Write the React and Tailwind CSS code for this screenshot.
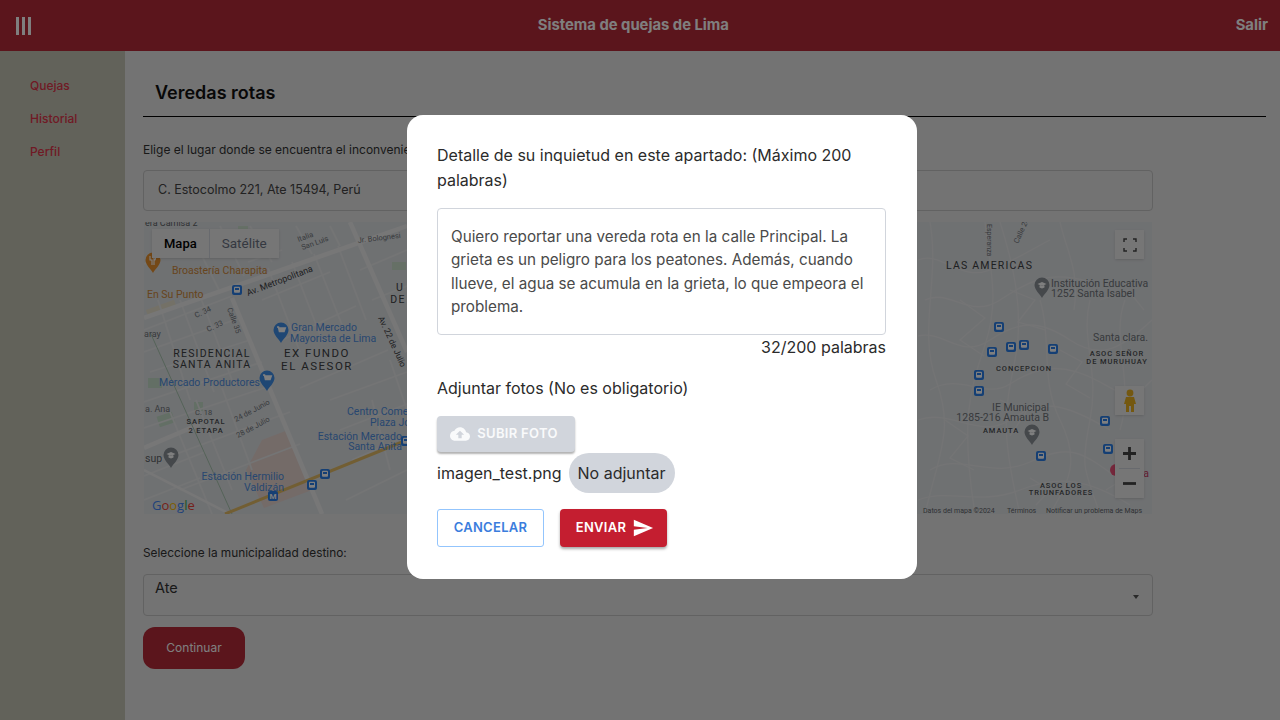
const cloudPath =
    "M19.35 10.04C18.67 6.59 15.64 4 12 4 9.11 4 6.6 5.64 5.35 8.04 2.34 8.36 0 10.91 0 14c0 3.31 2.69 6 6 6h13c2.76 0 5-2.24 5-5 0-2.64-2.05-4.78-4.65-4.96zM14 13v4h-4v-4H7l5-5 5 5h-3z";
const sendPath = "M2.01 21 23 12 2.01 3 2 10l15 2-15 2z";

const busStops = [
    [999, 327], [992, 352], [1011, 347], [1024, 345], [1053, 349], [979, 375], [979, 391], [1105, 421],
    [1041, 456], [1108, 449],
];

// minor streets of the map, in screen coordinates
const leftStreets = [
    "M144 330 L232 296", "M144 352 L240 318", "M150 372 L250 340", "M144 402 L262 362", "M144 428 L270 386",
    "M160 460 L290 412", "M180 490 L300 444", "M158 300 L190 400", "M180 300 L214 392", "M200 296 L232 380",
    "M222 388 L252 470", "M196 400 L232 490", "M170 412 L212 514", "M248 262 L282 250", "M262 300 L330 272",
    "M282 340 L356 306", "M300 388 L388 350", "M268 268 L300 352", "M292 262 L322 340", "M314 254 L344 330",
    "M338 246 L366 320", "M190 232 L220 292", "M220 226 L244 276", "M250 226 L272 262", "M296 226 L312 254",
    "M330 226 L340 246", "M360 270 L407 250", "M372 300 L407 286", "M330 400 L407 372", "M340 430 L407 404",
    "M352 460 L407 436", "M346 500 L407 470", "M372 400 L390 470", "M390 360 L407 410", "M144 264 L170 254",
    "M144 476 L205 452", "M144 500 L200 478",
];
const rightStreets = [
    "M918 260 C940 250 960 282 990 270 S1030 250 1050 240", "M925 300 C950 288 970 320 1000 300 S1050 270 1090 282",
    "M918 336 C945 330 960 360 990 340 S1040 320 1070 340 S1120 350 1152 320",
    "M930 390 C960 372 985 400 1010 384 S1060 360 1100 382 S1130 400 1152 380",
    "M918 420 C950 408 980 440 1010 420 S1060 400 1110 430", "M930 470 C960 452 990 480 1030 462 S1080 450 1120 480",
    "M918 500 C950 488 980 506 1020 490 S1090 480 1130 505", "M985 222 C990 270 1000 300 985 345 S960 420 975 514",
    "M1000 222 C1012 260 1025 310 1015 360 S1000 430 1020 514", "M1040 300 C1052 340 1040 380 1060 420 S1070 480 1050 514",
    "M1090 300 C1080 340 1100 370 1090 420 S1085 470 1100 514", "M930 222 C940 280 918 330 936 380 S940 450 925 514",
    "M1125 300 C1110 340 1135 380 1120 430", "M1060 222 C1066 250 1080 270 1074 310", "M960 300 L985 318 L960 340 L984 356",
    "M1010 290 L1035 300 L1018 322 L1046 330", "M1060 350 L1082 362 L1066 384 L1090 398", "M945 420 L968 436 L950 458 L974 470",
    "M1030 478 L1050 490 L1036 505", "M1100 300 L1128 290 L1144 310", "M1106 490 L1128 476", "M1000 400 L1026 412 L1010 436",
];

function Pin({ x, y, fill, children }) {
    return (
        <g transform={`translate(${x} ${y})`}>
            <path d="M0 11 C-2 7 -7.5 3 -7.5 -2 A7.5 7.5 0 1 1 7.5 -2 C7.5 3 2 7 0 11 Z" fill={fill} />
            {children}
        </g>
    );
}

function Cart() {
    return <path d="M-4 -5 H-2.5 L-1.5 -0.5 H3 L4.2 -4 H-2" stroke="#fff" strokeWidth="1.6" fill="#fff" />;
}

function Fork() {
    return <path d="M-3 -6 V-2 H-1 V3 M1 -6 V3 M1 -6 C3 -5 3 -2 1 -1.5" stroke="#fff" strokeWidth="1.1" fill="none" />;
}

function Cap() {
    return <path d="M-4.5 -3 L0 -5 L4.5 -3 L0 -1 Z M-2.5 -1.5 V0.5 L0 1.5 L2.5 0.5 V-1.5" fill="#fff" />;
}

function Bus({ x, y, label = false }) {
    return (
        <g transform={`translate(${x} ${y})`}>
            <rect x="-5" y="-5" width="10" height="10" rx="2" fill="#2a7fe8" />
            {label ? (
                <text x="0" y="3" textAnchor="middle" fontSize="8" fontWeight="700" fill="#fff">M</text>
            ) : (
                <>
                    <rect x="-3" y="-3.2" width="6" height="6" rx="1" fill="#fff" />
                    <rect x="-2" y="-2" width="4" height="2" fill="#2a7fe8" />
                </>
            )}
        </g>
    );
}

function MapLabel({ x, y, anchor = "start", size = 10.5, color = "#4f8fe0", spacing = 0, weight = 400, children }) {
    return (
        <text x={x} y={y} textAnchor={anchor} fontSize={size} fill={color} letterSpacing={spacing} fontWeight={weight}>
            {children}
        </text>
    );
}

function MapDrawing() {
    const place = { size: 10.5, color: "#3c4043", spacing: 1.2, anchor: "middle" };
    const small = { size: 7.5, color: "#4a4d50", spacing: 0.9, anchor: "middle", weight: 500 };
    const street = { size: 7.5, color: "#70757a" };
    return (
        <svg viewBox="144 222 1008 292" className="block w-full h-full font-['Roboto',sans-serif]">
            <rect x="144" y="222" width="1008" height="292" fill="#dfe2e5" />

            {/* patches */}
            <path d="M262 440 L288 430 L312 490 L264 508 L246 470 Z" fill="#e8d6d1" />
            <rect x="148" y="378" width="14" height="10" fill="#c6dfca" />
            <rect x="158" y="414" width="16" height="11" fill="#c6dfca" transform="rotate(-18 166 420)" />
            <rect x="194" y="402" width="9" height="9" fill="#c6dfca" />
            <rect x="225" y="246" width="12" height="8" fill="#cce0cd" />
            <rect x="238" y="226" width="10" height="7" fill="#cce0cd" />
            <rect x="392" y="262" width="14" height="8" fill="#cce0cd" />
            <rect x="146" y="305" width="30" height="6" fill="#e8e3cf" transform="rotate(-20 160 308)" />

            {/* streets */}
            <g stroke="#e9eaeb" strokeWidth="1.8" fill="none">
                {leftStreets.map((d) => (
                    <path key={d} d={d} />
                ))}
            </g>
            <g stroke="#e8e9ea" strokeWidth="1.3" fill="none">
                {rightStreets.map((d) => (
                    <path key={d} d={d} />
                ))}
            </g>
            <g stroke="#efefef" strokeWidth="4.5" fill="none">
                <path d="M144 318 L407 226" />
                <path d="M232 298 L322 514" />
                <path d="M350 222 L407 352" />
                <path d="M144 448 L200 424" />
                <path d="M144 470 L230 514" strokeWidth="2.5" />
            </g>
            <path d="M150 332 L232 514" stroke="#a9c6b0" strokeWidth="1" fill="none" />
            <path d="M225 514 L407 440" stroke="#e4bd66" strokeWidth="3" fill="none" />

            {/* left labels */}
            <MapLabel x={145} y={226} size={9} color="#5f6368">era Camisa 2</MapLabel>
            <MapLabel x={172} y={274} color="#d08a3a">Broastería Charapita</MapLabel>
            <MapLabel x={147} y={298} color="#d08a3a">En Su Punto</MapLabel>
            <g transform="rotate(-21 248 296)">
                <MapLabel x={248} y={296} size={9} color="#3c4043">Av. Metropolitana</MapLabel>
            </g>
            <g transform="rotate(-20 302 246)">
                <MapLabel x={300} y={241} {...street}>Italia</MapLabel>
                <MapLabel x={301} y={250} {...street}>San Luis</MapLabel>
            </g>
            <g transform="rotate(-7 358 243)">
                <MapLabel x={358} y={243} {...street}>Jr. Bolognesi</MapLabel>
            </g>
            <MapLabel x={291} y={331}>Gran Mercado</MapLabel>
            <MapLabel x={290} y={342}>Mayorista de Lima</MapLabel>
            <MapLabel x={212} y={357} {...place}>RESIDENCIAL</MapLabel>
            <MapLabel x={212} y={368} {...place}>SANTA ANITA</MapLabel>
            <MapLabel x={317} y={357} {...place} size={11.5} spacing={1.5}>EX FUNDO</MapLabel>
            <MapLabel x={317} y={370} {...place} size={11.5} spacing={1.5}>EL ASESOR</MapLabel>
            <MapLabel x={159} y={386}>Mercado Productores</MapLabel>
            <MapLabel x={206} y={424} {...small}>SAPOTAL</MapLabel>
            <MapLabel x={206} y={433} {...small}>2 ETAPA</MapLabel>
            <MapLabel x={195} y={415} {...street}>C. 18</MapLabel>
            <g transform="rotate(-28 236 422)">
                <MapLabel x={236} y={422} {...street}>24 de Junio</MapLabel>
            </g>
            <g transform="rotate(-28 238 438)">
                <MapLabel x={238} y={438} {...street}>28 de Julio</MapLabel>
            </g>
            <g transform="rotate(-25 196 318)">
                <MapLabel x={196} y={318} {...street}>C. 34</MapLabel>
            </g>
            <g transform="rotate(-25 208 332)">
                <MapLabel x={208} y={332} {...street}>C. 33</MapLabel>
            </g>
            <g transform="rotate(70 224 312)">
                <MapLabel x={222} y={308} {...street}>Calle 35</MapLabel>
            </g>
            <g transform="rotate(65 378 318)">
                <MapLabel x={378} y={318} size={8.5} color="#3c4043">Av. 22 de Julio</MapLabel>
            </g>
            <MapLabel x={400} y={291} {...place} anchor="middle">U</MapLabel>
            <MapLabel x={398} y={303} {...place} anchor="middle">DE</MapLabel>
            <MapLabel x={144} y={337} {...street} size={9}>aray</MapLabel>
            <MapLabel x={145} y={412} {...street} size={9}>a. Ana</MapLabel>
            <MapLabel x={145} y={462} size={10.5} color="#5f6368">sup</MapLabel>
            <MapLabel x={284} y={480} anchor="end">Estación Hermilio</MapLabel>
            <MapLabel x={284} y={491} anchor="end">Valdizán</MapLabel>
            <MapLabel x={347} y={415}>Centro Come</MapLabel>
            <MapLabel x={370} y={426}>Plaza Jo</MapLabel>
            <MapLabel x={402} y={440} anchor="end">Estación Mercado</MapLabel>
            <MapLabel x={402} y={450} anchor="end">Santa Anita</MapLabel>

            {/* left markers */}
            <Pin x={153} y={262} fill="#e8912d"><Fork /></Pin>
            <Pin x={281} y={332} fill="#3f8fe8"><Cart /></Pin>
            <Pin x={267} y={380} fill="#3f8fe8"><Cart /></Pin>
            <Pin x={171} y={457} fill="#8a9197"><Cap /></Pin>
            <Bus x={237} y={290} />
            <Bus x={325} y={474} />
            <Bus x={312} y={485} />
            <Bus x={273} y={496} label />
            <Bus x={406} y={441} />

            {/* Google */}
            <text x={152} y={510} fontSize="13" fontWeight="500" fontFamily="'Open Sans',sans-serif">
                <tspan fill="#4285f4">G</tspan>
                <tspan fill="#ea4335">o</tspan>
                <tspan fill="#fbbc05">o</tspan>
                <tspan fill="#4285f4">g</tspan>
                <tspan fill="#34a853">l</tspan>
                <tspan fill="#ea4335">e</tspan>
            </text>

            {/* right labels */}
            <MapLabel x={946} y={269} {...place} anchor="start">LAS AMERICAS</MapLabel>
            <MapLabel x={1051} y={287} color="#70757a">Institución Educativa</MapLabel>
            <MapLabel x={1051} y={297} color="#70757a">1252 Santa Isabel</MapLabel>
            <MapLabel x={1093} y={341} color="#70757a">Santa clara. </MapLabel>
            <MapLabel x={1117} y={356} {...small}>ASOC SEÑOR</MapLabel>
            <MapLabel x={1117} y={364} {...small}>DE MURUHUAY</MapLabel>
            <MapLabel x={1024} y={371} {...small}>CONCEPCION</MapLabel>
            <MapLabel x={1049} y={411} anchor="end" color="#70757a">IE Municipal</MapLabel>
            <MapLabel x={1049} y={421} anchor="end" color="#70757a">1285-216 Amauta B</MapLabel>
            <MapLabel x={983} y={433} {...small} anchor="start">AMAUTA</MapLabel>
            <MapLabel x={1061} y={488} {...small}>ASOC LOS</MapLabel>
            <MapLabel x={1061} y={495} {...small}>TRIUNFADORES</MapLabel>
            <g transform="rotate(90 987 224)">
                <MapLabel x={987} y={224} {...street} size={7}>Esperanza</MapLabel>
            </g>
            <g transform="rotate(-65 1018 244)">
                <MapLabel x={1018} y={244} {...street}>Calle 24</MapLabel>
            </g>

            {/* right markers */}
            <Pin x={1042} y={287} fill="#8a9197"><Cap /></Pin>
            <Pin x={1032} y={434} fill="#8a9197"><Cap /></Pin>
            <circle cx={1116} cy={470} r="6" fill="#ea4f77" />
            <text x="1146" y="477" fontSize="10.5" fill="#c5385f" textAnchor="middle">a</text>
            {busStops.map(([x, y]) => (
                <Bus key={`${x}-${y}`} x={x} y={y} />
            ))}

            {/* attribution */}
            <text x="923" y="513" fontSize="7" fill="#5f6368">Datos del mapa ©2024</text>
            <text x="1007" y="513" fontSize="7" fill="#5f6368">Términos</text>
            <text x="1046" y="513" fontSize="7" fill="#5f6368">Notificar un problema de Maps</text>
        </svg>
    );
}

function MapControls() {
    return (
        <>
            <div className="absolute left-2 top-[7px] flex h-[29px] items-center bg-[#ececec] font-['Roboto',sans-serif] shadow-sm">
                <span className="flex h-full items-center border-r border-gray-300 px-3 text-[13px] font-medium text-black">Mapa</span>
                <span className="flex h-full items-center px-[12px] text-[13.5px] text-gray-500">Satélite</span>
            </div>
            <div className="absolute right-2 top-2 flex h-[29px] w-[29px] items-center justify-center bg-[#ececec] shadow-sm">
                <svg viewBox="0 0 14 14" className="w-[14px] h-[14px]" fill="none" stroke="#444" strokeWidth="1.4">
                    <path d="M1 4 V1 H4 M10 1 H13 V4 M1 10 V13 H4 M13 10 V13 H10" />
                </svg>
            </div>
            <div className="absolute right-2 top-[164px] flex h-[29px] w-[29px] items-center justify-center bg-[#ececec] shadow-sm">
                <svg viewBox="0 0 14 24" className="w-[14px] h-[24px]" fill="#e8b020">
                    <circle cx="7" cy="4" r="3.4" />
                    <path d="M3 8 H11 L13 15 H11 V23 H8 V17 H6 V23 H3 V15 H1 Z" />
                </svg>
            </div>
            <div className="absolute right-2 top-[217px] flex w-[29px] flex-col items-center bg-[#ececec] px-1 shadow-sm">
                <svg viewBox="0 0 14 14" className="my-[8px] w-[13px] h-[13px]" fill="#444">
                    <path d="M5.5 0 H8.5 V5.5 H14 V8.5 H8.5 V14 H5.5 V8.5 H0 V5.5 H5.5 Z" />
                </svg>
                <div className="h-px w-full bg-gray-300" />
                <svg viewBox="0 0 14 14" className="my-[8px] w-[13px] h-[13px]" fill="#444">
                    <path d="M0 5.5 H14 V8.5 H0 Z" />
                </svg>
            </div>
        </>
    );
}

function Modal() {
    return (
        <div className="fixed inset-0 z-10 bg-black/50 flex items-start justify-center pl-[44px] pt-[115px]">
            <div className="w-[510px] h-[464px] rounded-2xl bg-white pl-[30px] pr-[31px] pt-[28px] text-[#2b2b2b]">
                <p className="text-base leading-[25px]">
                    Detalle de su inquietud en este apartado: (Máximo 200 palabras)
                </p>
                <div className="mt-[15px] h-[127px] rounded border border-gray-300 px-[13px] pt-[16px] text-[15.25px] leading-[23.3px] text-[#4a4a4a]">
                    Quiero reportar una vereda rota en la calle Principal. La grieta es un peligro para los peatones. Además, cuando llueve, el agua se acumula en la grieta, lo que empeora el problema.
                </div>
                <p className="text-right text-base leading-6">32/200 palabras</p>
                <p className="mt-[17px] text-base leading-6">Adjuntar fotos (No es obligatorio)</p>
                <button className="mt-4 flex h-9 w-[138px] items-center justify-center gap-[7px] rounded-sm bg-gray-300 pr-1 text-[13px] font-semibold tracking-[0.3px] text-gray-50 shadow-[0_2px_2px_rgba(0,0,0,0.3)]">
                    <svg viewBox="0 0 24 24" className="w-5 h-5" fill="currentColor">
                        <path d={cloudPath} />
                    </svg>
                    SUBIR FOTO
                </button>
                <div className="mt-px flex items-center gap-[7px] text-base">
                    <span>imagen_test.png</span>
                    <span className="flex h-10 items-center rounded-[20px] bg-gray-300 px-[9px]">No adjuntar</span>
                </div>
                <div className="mt-4 flex gap-4">
                    <button className="h-[38px] w-[107px] rounded-[3px] border border-[#93c5fd] text-[13px] font-semibold tracking-[0.3px] text-[#3b7ddd]">
                        CANCELAR
                    </button>
                    <button className="flex h-[38px] w-[107px] items-center justify-center gap-[6px] rounded-sm bg-[#c41e30] pl-[3px] text-[13px] font-semibold tracking-[0.3px] text-white shadow-[0_2px_3px_rgba(0,0,0,0.35)]">
                        ENVIAR
                        <svg viewBox="0 0 24 24" className="w-[22px] h-[22px]" fill="currentColor">
                            <path d={sendPath} />
                        </svg>
                    </button>
                </div>
            </div>
        </div>
    );
}

export default function App() {
    return (
        <div className="flex h-[720px] w-[1280px] flex-col overflow-hidden bg-[#e6e6e6] font-['Inter',sans-serif] text-[#333]">
            {/* Header */}
            <header className="flex h-[51px] shrink-0 items-center justify-between bg-[#b62a38] pl-4 pr-3 text-white">
                <div className="flex h-[18px] gap-[3px]">
                    <span className="w-[3px] bg-white" />
                    <span className="w-[3px] bg-white" />
                    <span className="w-[3px] bg-white" />
                </div>
                <span className="text-[14.8px] font-bold">Sistema de quejas de Lima</span>
                <span className="text-[14.8px] font-bold">Salir</span>
            </header>

            <div className="flex flex-1">
                {/* Sidebar */}
                <nav className="w-[125px] shrink-0 bg-[#c4c4b4] pl-[30px] pt-[27px] text-xs font-medium text-[#e0344a]">
                    <ul className="flex flex-col gap-[17px]">
                        <li>Quejas</li>
                        <li>Historial</li>
                        <li>Perfil</li>
                    </ul>
                </nav>

                {/* Main */}
                <main className="flex-1 pl-[18px] pr-[14px]">
                    <h1 className="h-[66px] border-b border-black pl-3 pt-[30px] text-lg leading-6 font-semibold text-[#111]">
                        Veredas rotas
                    </h1>
                    <div className="w-[1010px]">
                        <p className="mt-[25px] text-xs leading-4">Elige el lugar donde se encuentra el inconveniente:</p>
                        <div className="mt-3 flex h-[41px] items-center rounded border border-[#c4c4c4] pl-[14px] text-[12.5px] text-[#444]">
                            C. Estocolmo 221, Ate 15494, Perú
                        </div>
                        <div className="relative mx-px mt-[11px] h-[292px]">
                            <MapDrawing />
                            <MapControls />
                        </div>
                        <p className="mt-[31px] text-[11.85px] leading-4">Seleccione la municipalidad destino:</p>
                        <div className="relative mt-[13px] h-[42px] rounded border border-[#c4c4c4] pl-[11px] pt-[3px] text-[14.5px] leading-5">
                            Ate
                            <span className="absolute right-[13px] top-[20px] h-0 w-0 border-x-[3.5px] border-t-4 border-x-transparent border-t-[#555]" />
                        </div>
                        <button className="mt-[11px] h-[42px] w-[102px] rounded-xl bg-[#b62a38] text-xs text-white">Continuar</button>
                    </div>
                </main>
            </div>

            <Modal />
        </div>
    );
}
